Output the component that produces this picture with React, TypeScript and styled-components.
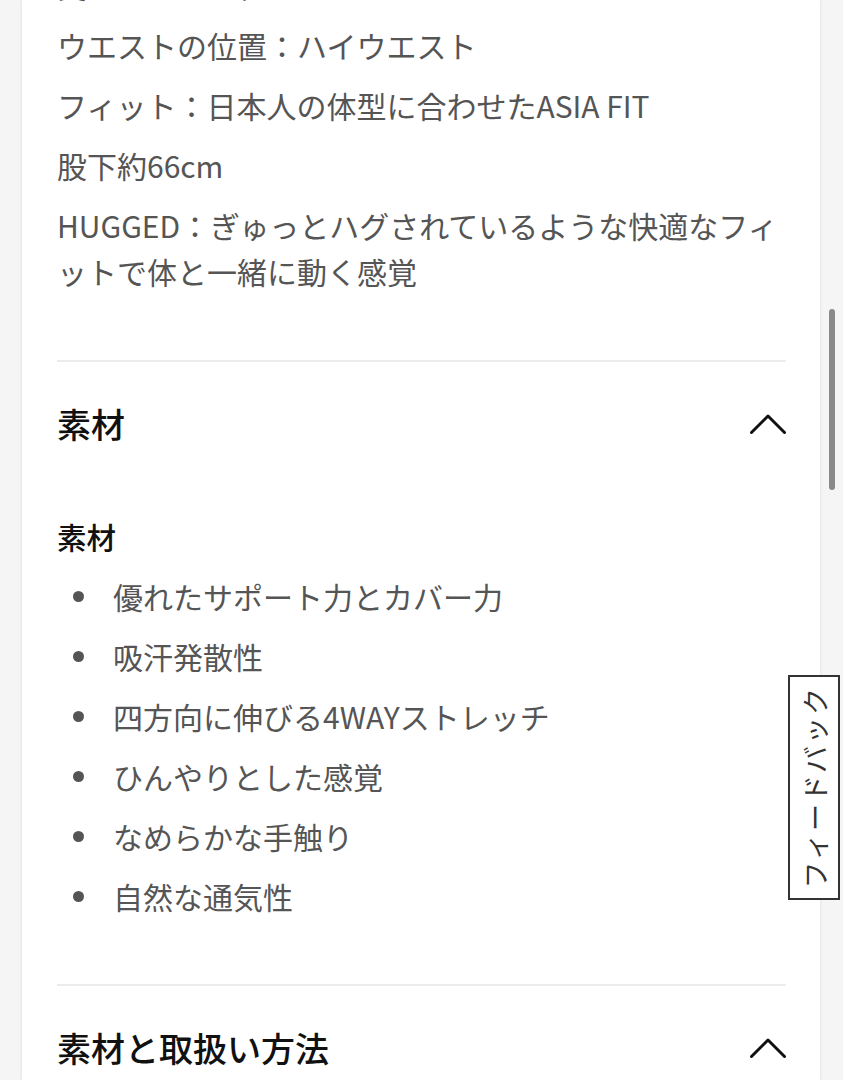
import styled, { createGlobalStyle } from "styled-components";

const GlobalStyle = createGlobalStyle`
  html, body {
    margin: 0;
    padding: 0;
    background: #f5f5f5;
    overflow: hidden;
  }
  body {
    font-family: "Noto Sans CJK JP", "Noto Sans", sans-serif;
    -webkit-font-smoothing: antialiased;
  }
`;

const details = [
  "丈：フルレングス",
  "ウエストの位置：ハイウエスト",
  "フィット：日本人の体型に合わせたASIA FIT",
  "股下約66cm",
  "HUGGED：ぎゅっとハグされているような快適なフィットで体と一緒に動く感覚",
];

const features = [
  "優れたサポート力とカバー力",
  "吸汗発散性",
  "四方向に伸びる4WAYストレッチ",
  "ひんやりとした感覚",
  "なめらかな手触り",
  "自然な通気性",
];

const Page = () => {
  return (
    <>
      <GlobalStyle />
      <Layout>
        <Panel>
          <Description>
            {details.map((d) => (
              <Paragraph key={d}>{d}</Paragraph>
            ))}
          </Description>

          <Section>
            <SectionHeader>
              <SectionTitle>素材</SectionTitle>
              <Chevron />
            </SectionHeader>
            <SectionBody>
              <SubTitle>素材</SubTitle>
              <BulletList>
                {features.map((f) => (
                  <BulletItem key={f}>
                    <Dot />
                    {f}
                  </BulletItem>
                ))}
              </BulletList>
            </SectionBody>
          </Section>

          <Section>
            <SectionHeader>
              <SectionTitle>素材と取扱い方法</SectionTitle>
              <Chevron />
            </SectionHeader>
          </Section>
        </Panel>

        <Gutter>
          <ScrollThumb />
        </Gutter>
      </Layout>

      <FeedbackTab>
        <FeedbackLabel>フィードバック</FeedbackLabel>
      </FeedbackTab>
    </>
  );
};

const Chevron = () => (
  <svg width="36" height="20" viewBox="0 0 36 20" fill="none">
    <polyline
      points="1.5,18.5 18,2 34.5,18.5"
      stroke="#111"
      strokeWidth="3"
      strokeLinecap="round"
      strokeLinejoin="round"
    />
  </svg>
);

const Layout = styled.div`
  display: flex;
  padding-left: 22px;
  height: 1080px;
`;

const Panel = styled.main`
  width: 798px;
  flex-shrink: 0;
  background: #fff;
  box-shadow: 0 0 3px rgba(0, 0, 0, 0.12);
  padding: 0 34px 0 35px;
  box-sizing: border-box;
`;

const Description = styled.div`
  display: flex;
  flex-direction: column;
  gap: 14px;
  margin-top: -38px;
  padding-bottom: 66px;
`;

const Paragraph = styled.p`
  margin: 0;
  font-size: 30px;
  line-height: 46px;
  color: #555;
`;

const Section = styled.section`
  border-top: 2px solid #ececec;
`;

const SectionHeader = styled.div`
  display: flex;
  align-items: center;
  justify-content: space-between;
  padding: 39px 0 40px;
`;

const SectionTitle = styled.h3`
  margin: 0;
  font-size: 34px;
  line-height: 46px;
  font-weight: 500;
  color: #111;
`;

const SectionBody = styled.div`
  padding: 26px 0 65px;
`;

const SubTitle = styled.h4`
  margin: 0 0 14px;
  font-size: 29.5px;
  line-height: 46px;
  font-weight: 500;
  color: #111;
`;

const BulletList = styled.ul`
  list-style: none;
  margin: 0;
  padding: 0;
  display: flex;
  flex-direction: column;
  gap: 14px;
`;

const BulletItem = styled.li`
  display: flex;
  align-items: center;
  font-size: 30px;
  line-height: 46px;
  color: #555;
`;

const Dot = styled.span`
  width: 11px;
  height: 11px;
  border-radius: 50%;
  background: #555;
  margin: 0 29px 0 16px;
  flex-shrink: 0;
`;

const Gutter = styled.div`
  flex: 1;
  padding: 309px 0 0 9px;
`;

const ScrollThumb = styled.div`
  width: 6px;
  height: 181px;
  border-radius: 3px;
  background: #8a8a8a;
`;

const FeedbackTab = styled.div`
  position: fixed;
  right: 3px;
  top: 675px;
  width: 52px;
  height: 225px;
  box-sizing: border-box;
  border: 2px solid #333;
  background: #fff;
  display: flex;
  align-items: center;
  justify-content: center;
`;

const FeedbackLabel = styled.span`
  writing-mode: vertical-rl;
  text-orientation: sideways;
  transform: rotate(180deg);
  font-size: 27px;
  letter-spacing: 2px;
  color: #333;
`;

export default Page;
